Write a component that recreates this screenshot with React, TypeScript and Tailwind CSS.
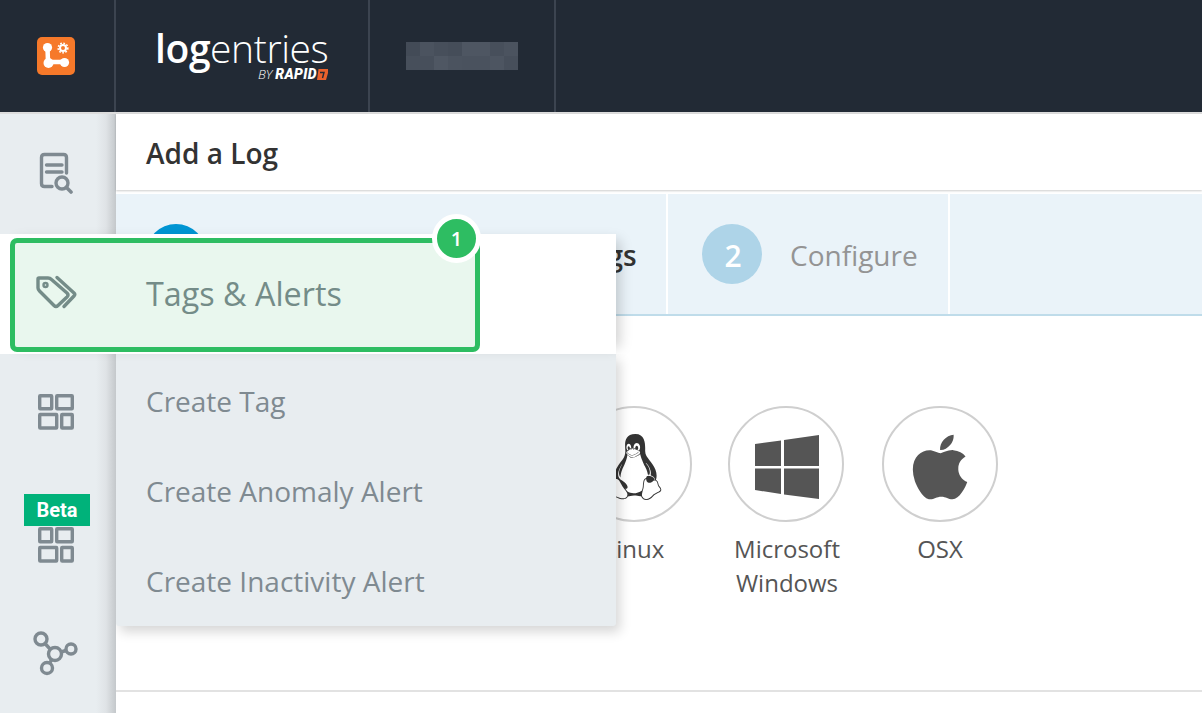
import React from "react";
import { FaLinux, FaApple } from "react-icons/fa";

const blur = [
  ["#434b57", "#4b535f", "#474f5b", "#454d59", "#4e5662", "#4e5662", "#474f5b", "#4b535f"],
  ["#474f5b", "#474f5b", "#4f5763", "#4b535f", "#4a525e", "#4a525e", "#4d5561", "#474f5b"],
];

function GridIcon() {
  return (
    <svg width="36" height="36" viewBox="0 0 36 36" fill="none" stroke="#7f8a91" strokeWidth="3.4" strokeLinejoin="round">
      <rect x="1.7" y="1.7" width="12" height="13" rx="0.5" />
      <rect x="18.7" y="1.700" width="15.600" height="13" rx="0.5" />
      <rect x="1.7" y="20.5" width="17" height="13.500" rx="0.5" />
      <rect x="23.7" y="20.5" width="10.600" height="13.500" rx="0.5" />
    </svg>
  );
}

function Os({ label, children, className }: { label: React.ReactNode; children: React.ReactNode; className?: string }) {
  return (
    <div className={"w-[116px] flex flex-col items-center shrink-0 " + (className ?? "")}>
      <div className="w-[116px] h-[116px] rounded-full border-2 border-[#cfcfcf] flex items-center justify-center">{children}</div>
      <div className="mt-[10px] w-[154px] text-center text-[24px] leading-[34px] text-[#555555]">{label}</div>
    </div>
  );
}

export default function App() {
  return (
    <div className="relative w-[1202px] h-[713px] overflow-hidden bg-white flex flex-col font-['Open_Sans',sans-serif]">
      <header className="h-[114px] shrink-0 flex bg-[#222a35] border-b-2 border-[#dcdcdc]">
        <div className="w-[116px] shrink-0 border-r-2 border-[#3c4450] flex items-center justify-center pr-[3px]">
          <svg width="38" height="38" viewBox="0 0 38 38">
            <rect x="0" y="0" width="38" height="38" rx="5" fill="#f6792a" />
            <path d="M10.500 11 L11 25 L27 25" fill="none" stroke="#fff" strokeWidth="4.500" strokeLinecap="round" strokeLinejoin="round" />
            <circle cx="10.500" cy="10.500" r="4.600" fill="#fff" />
            <circle cx="11.500" cy="26" r="5" fill="#fff" />
            <circle cx="27.500" cy="25.500" r="4.600" fill="#fff" />
            <circle cx="26" cy="11" r="3" fill="none" stroke="#fff" strokeWidth="2" />
            <circle cx="26" cy="11" r="4.800" fill="none" stroke="#fff" strokeWidth="1.600" strokeDasharray="1.700 1.500" />
          </svg>
        </div>
        <div className="w-[254px] shrink-0 border-r-2 border-[#3c4450] pl-[39px] pt-[23px] text-white">
          <div className="text-[39px] leading-[50px] tracking-[-0.4px] h-[44px] whitespace-nowrap">
            <span className="font-semibold">log</span>
            <span className="font-light">entries</span>
          </div>
          <div className="flex items-center justify-end w-[173px] h-[14px] text-[13px] leading-[14px] italic">
            <span className="font-light mr-[3px]">BY</span>
            <span className="font-['Roboto',sans-serif] font-black text-[14px] tracking-[0.4px]">RAPID</span>
            <svg width="11" height="11" viewBox="0 0 11 11">
              <path d="M1.500 0 H11 V4 L9 11 H0 Z" fill="#e8612c" />
              <path d="M3 3.500 H7 L5.500 9" fill="none" stroke="#222a35" strokeWidth="1.400" />
            </svg>
          </div>
        </div>
        <div className="w-[186px] shrink-0 border-r-2 border-[#3c4450] pl-[36px] pt-[42px]">
          {blur.map((row, i) => (
            <div key={i} className="flex">
              {row.map((c, j) => (
                <div key={j} className="w-[14px] h-[14px]" style={{ background: c }} />
              ))}
            </div>
          ))}
        </div>
      </header>

      <div className="flex flex-1 min-h-0">
        <aside className="w-[116px] shrink-0 bg-[linear-gradient(to_right,#e8edf0_0,#e8edf0_96px,#dfe3e6_106px,#c4c8cb_116px)] flex flex-col items-start">
          <svg className="ml-[38px] mt-[38px] mb-[-2px]" width="36" height="42" viewBox="0 0 36 42" fill="none" stroke="#7f8a91" strokeWidth="3.400" strokeLinecap="round">
            <path d="M14 34.500 H6.500 Q3.500 34.500 3.500 31.500 V5.500 Q3.500 2.500 6.500 2.500 H25.500 Q28.500 2.500 28.500 5.500 V21" />
            <path d="M8.500 13 H24 M8.500 20 H24" />
            <circle cx="24" cy="31" r="6" />
            <path d="M28.500 35.500 L33 40" strokeWidth="3.600" />
          </svg>
          <div className="ml-[38px] mt-[202px]"><GridIcon /></div>
          <div className="ml-[38px] mt-[97px]"><GridIcon /></div>
          <svg className="ml-[33px] mt-[67px]" width="46" height="46" viewBox="0 0 46 46" fill="none" stroke="#7f8a91" strokeWidth="3.400">
            <circle cx="8" cy="9" r="6" />
            <circle cx="22" cy="24" r="6.500" />
            <circle cx="38" cy="19" r="5" />
            <circle cx="14" cy="38" r="5.500" />
            <path d="M12 13.500 L17.500 19.500 M28 22 L33 20.500 M19 29.500 L16.500 33" />
          </svg>
        </aside>

        <main className="flex-1 min-w-0 flex flex-col">
          <div className="h-[76px] shrink-0 flex items-center pl-[30px] pt-[2px] text-[28px] font-semibold text-[#333333] shadow-[0_1px_2px_rgba(0,0,0,0.2)]">Add a Log</div>
          <div className="mt-[4px] h-[122px] shrink-0 flex bg-[#eaf3f9] border-b-2 border-[#bfdcea]">
            <div className="w-[552px] shrink-0 pl-[30px] flex items-center border-r-2 border-white">
              <div className="w-[60px] h-[60px] rounded-full bg-[#0095d3] text-white text-[30px] font-semibold flex items-center justify-center shrink-0">1</div>
              <div className="ml-[33px] pt-[2px] text-[28px] font-semibold text-[#333333] whitespace-nowrap">Select How to Send Your Logs</div>
            </div>
            <div className="w-[282px] shrink-0 pl-[34px] flex items-center border-r-2 border-white">
              <div className="w-[60px] h-[60px] rounded-full bg-[#aed4e8] text-white text-[30px] font-semibold pt-[2px] pl-[2px] flex items-center justify-center shrink-0">2</div>
              <div className="ml-[28px] pt-[2px] text-[28px] text-[#949494]">Configure</div>
            </div>
          </div>
          <div className="h-[376px] shrink-0 border-b-2 border-[#e2e2e2] pt-[90px] pl-[460px] flex items-start gap-[38px]">
            <Os label="Linux" className="mr-[-2px]"><FaLinux size={66} color="#333333" className="mt-[6px]" /></Os>
            <Os label={<div className="pl-[2px]">Microsoft<br />Windows</div>}>
              <svg className="mt-[6px] ml-[2px]" width="64" height="64" viewBox="0 0 64 64" fill="#555555">
                <path d="M0 9 L26 5.500 V31 H0Z M29 5 L64 0 V31 H29Z M0 33.500 H26 V59 L0 55Z M29 33.500 H64 V64 L29 59.500Z" />
              </svg>
            </Os>
            <Os label="OSX"><FaApple size={74} color="#555555" className="mt-[6px]" /></Os>
          </div>
        </main>
      </div>

      {/* Highlighted flyout menu over the page */}
      <div className="absolute left-0 top-[234px] w-[616px]">
        <div className="relative z-10 h-[120px] bg-white pt-[4px] pl-[10px] shadow-[10px_0_12px_-6px_rgba(0,0,0,0.18)]">
          <div className="relative w-[470px] h-[114px] rounded-[7px] border-[5px] border-[#2ebd62] bg-[#e9f7ee] flex items-center text-[#748c88]">
            <svg className="ml-[21px] mb-[6px]" width="42" height="34" viewBox="0 0 42 34" fill="none" stroke="#748c88" strokeWidth="3.400" strokeLinejoin="round" strokeLinecap="round">
              <path d="M3 3 H12 Q14 3 15.500 4.500 L31 18 Q33 20 31 22 L22 30.500 Q20 32.500 18 30.500 L3.500 16 Q2 14.500 2 13 V4 Q2 3 3 3Z" />
              <circle cx="9.500" cy="10" r="2" strokeWidth="2.400" />
              <path d="M21 2.500 L38 18 Q39.500 19.500 38 21 L28 31.500" />
            </svg>
            <span className="ml-[68px] mb-[3px] text-[32.3px] leading-none whitespace-nowrap">Tags &amp; Alerts</span>
            <div className="absolute right-[-6px] top-[-29px] w-[49px] h-[49px] rounded-full border-[5px] border-white bg-[#2ebd62] text-white text-[20px] font-semibold flex items-center justify-center">1</div>
          </div>
        </div>
        <div className="ml-[116px] h-[272px] bg-[#e8edf0] rounded-b-[3px] shadow-[4px_6px_12px_rgba(0,0,0,0.16)] [clip-path:inset(0_-30px_-30px_0)] flex flex-col justify-start pl-[30px] pt-[2px] text-[28px] text-[#7f8a91]">
          <div className="h-[90px] flex items-center">Create Tag</div>
          <div className="h-[90px] flex items-center">Create Anomaly Alert</div>
          <div className="h-[90px] flex items-center">Create Inactivity Alert</div>
        </div>
      </div>

      <div className="absolute left-[24px] top-[494px] w-[66px] h-[32px] bg-[#00b27a] text-white text-[20px] font-bold font-['Roboto',sans-serif] flex items-center justify-center">Beta</div>
    </div>
  );
}
